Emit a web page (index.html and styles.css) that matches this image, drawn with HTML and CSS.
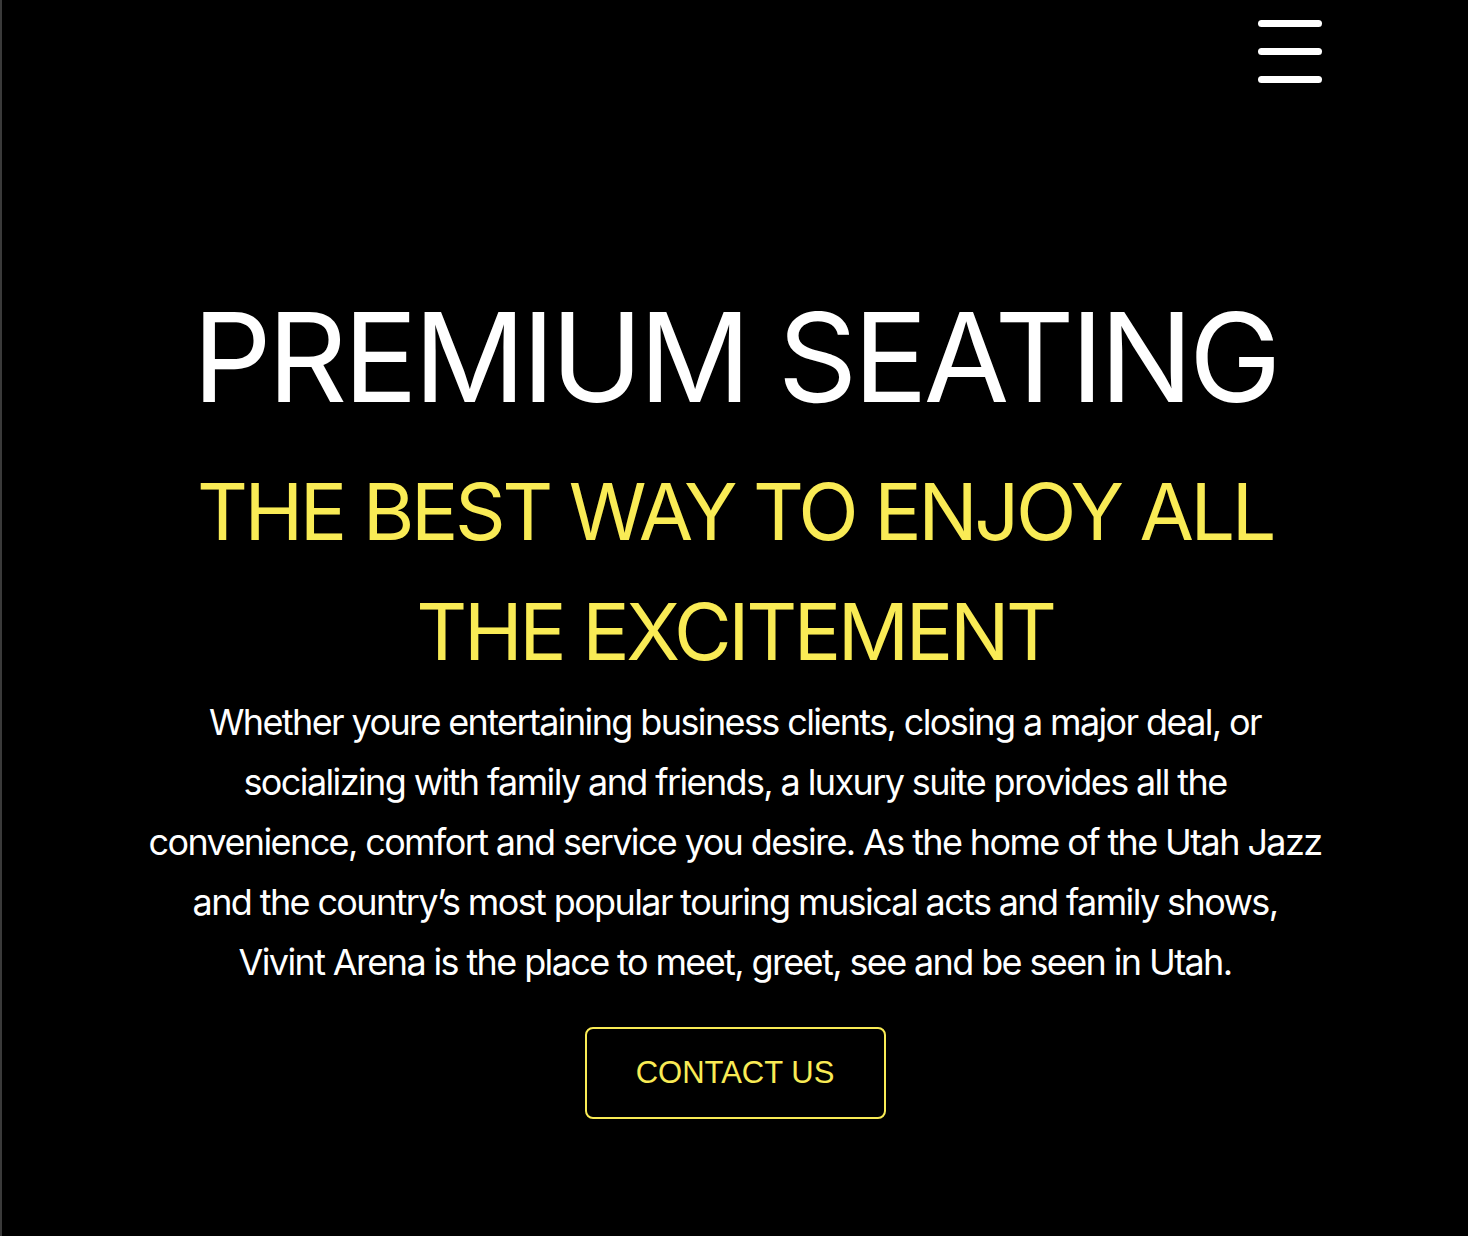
FILE: index.html
```html
<!DOCTYPE html>
<html lang="en">
<head>
<meta charset="utf-8">
<title>Premium Seating</title>
<link rel="stylesheet" href="styles.css">
</head>
<body>
<div class="page">
  <header class="topbar">
    <button class="menu" aria-label="Menu">
      <span class="bar"></span>
      <span class="bar"></span>
      <span class="bar"></span>
    </button>
  </header>
  <main class="hero">
    <h1 class="title">PREMIUM SEATING</h1>
    <h2 class="subtitle">THE BEST WAY TO ENJOY ALL THE EXCITEMENT</h2>
    <p class="lead">Whether youre entertaining business clients, closing a major deal, or socializing with family and friends, a luxury suite provides all the convenience, comfort and service you desire. As the home of the Utah Jazz and the country’s most popular touring musical acts and family shows, Vivint Arena is the place to meet, greet, see and be seen in Utah.</p>
    <a class="cta" href="#">CONTACT US</a>
  </main>
</div>
</body>
</html>
```

FILE: styles.css
```css
html, body {
  margin: 0;
  padding: 0;
  background: #000;
}
body {
  min-height: 1236px;
  border-left: 2px solid #3a3a3a;
  box-sizing: border-box;
  font-family: Inter, "Noto Sans", sans-serif;
  color: #fff;
}
.page {
  display: flex;
  flex-direction: column;
}
.topbar {
  display: flex;
  justify-content: flex-end;
  padding: 20px 146px 0 0;
}
.menu {
  display: flex;
  flex-direction: column;
  gap: 21px;
  width: 64px;
  padding: 0;
  border: 0;
  background: none;
  cursor: pointer;
}
.bar {
  display: block;
  width: 64px;
  height: 7px;
  border-radius: 4px;
  background: #fff;
}
.hero {
  display: flex;
  flex-direction: column;
  align-items: center;
  text-align: center;
  padding-top: 212px;
}
.title {
  margin: 0;
  font-size: 124px;
  font-weight: 400;
  line-height: 1;
  letter-spacing: -0.033em;
}
.subtitle {
  margin: 32px 0 0;
  width: 1140px;
  font-size: 79px;
  font-weight: 400;
  line-height: 120px;
  color: #f9eb55;
  letter-spacing: -0.043em;
}
.lead {
  margin: 1px 0 0;
  width: 1176px;
  font-size: 36px;
  line-height: 60px;
  letter-spacing: -0.045em;
}
.cta {
  margin-top: 35px;
  display: flex;
  align-items: center;
  justify-content: center;
  width: 297px;
  height: 88px;
  border: 2px solid #f9eb55;
  border-radius: 8px;
  color: #f9eb55;
  text-decoration: none;
  font-family: "Liberation Sans", Arial, sans-serif;
  font-size: 31px;
}
```
